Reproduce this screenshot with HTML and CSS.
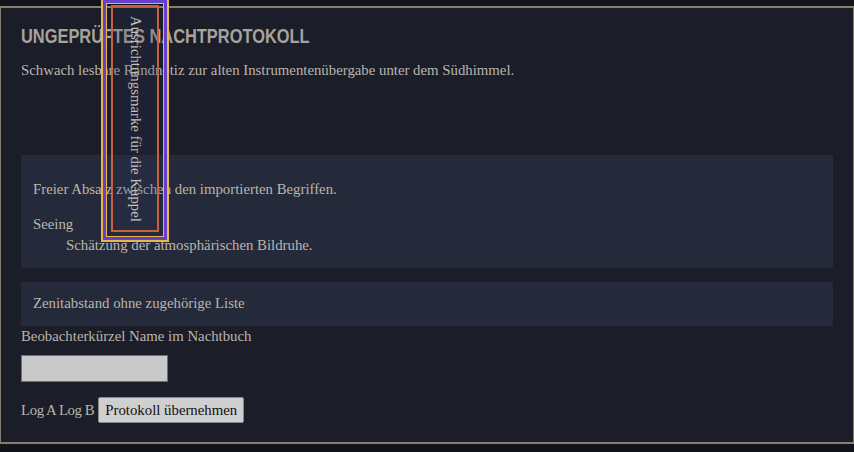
FILE: index.html
```html
<!DOCTYPE html>
<html lang="de">
<head>
<meta charset="utf-8">
<title>Ungeprüftes Nachtprotokoll</title>
<link rel="stylesheet" href="styles.css">
</head>
<body>
<main class="log">
  <h1 class="log-title">UNGEPRÜFTES NACHTPROTOKOLL</h1>
  <p class="log-note">Schwach lesbare Randnotiz zur alten Instrumentenübergabe unter dem Südhimmel.</p>
  <section class="panel panel-terms">
    <p class="panel-text">Freier Absatz zwischen den importierten Begriffen.</p>
    <dl class="terms">
      <dt>Seeing</dt>
      <dd>Schätzung der atmosphärischen Bildruhe.</dd>
    </dl>
  </section>
  <section class="panel panel-short">
    <p class="panel-line">Zenitabstand ohne zugehörige Liste</p>
  </section>
  <form class="entry">
    <label class="entry-label" for="obs">Beobachterkürzel Name im Nachtbuch</label>
    <input class="entry-input" id="obs" type="text">
    <div class="entry-row">
      <span class="entry-logs">Log A Log B</span>
      <button class="entry-button" type="button">Protokoll übernehmen</button>
    </div>
  </form>
</main>
<aside class="marker">
  <div class="marker-purple">
    <div class="marker-gold">
      <div class="marker-frame">
        <span class="marker-text">Ausrichtungsmarke für die Kuppel</span>
      </div>
    </div>
  </div>
</aside>
</body>
</html>
```

FILE: styles.css
```css
html, body {
  margin: 0;
  padding: 0;
  background: #121419;
}

body {
  padding-top: 6px;
  font-family: "Liberation Serif", "DejaVu Serif", serif;
  font-size: 14.8px;
  line-height: 21px;
  color: #bab5ad;
  position: relative;
  height: 446px;
  overflow: hidden;
}

.log {
  background: #1b1e29;
  border: 1px solid #877e72;
  border-top-width: 2px;
  border-bottom-width: 2px;
  padding: 16px 20px 19px;
}

.log-title {
  margin: 0;
  font-family: "Liberation Sans", Arial, sans-serif;
  font-weight: bold;
  font-size: 20px;
  line-height: 24px;
  color: #a8a39c;
  transform: scaleX(0.82);
  transform-origin: left center;
  white-space: nowrap;
}

.log-note {
  margin: 12px 0 0;
}

.panel {
  background: #252a3a;
  padding: 0 12px;
}

.panel-terms {
  margin-top: 74px;
  padding-top: 24px;
  padding-bottom: 12px;
}

.panel-text {
  margin: 0 0 14px;
}

.terms {
  margin: 0;
}

.terms dt {
  margin: 0;
}

.terms dd {
  margin: 0 0 0 33px;
}

.panel-short {
  margin-top: 14px;
  padding-top: 11px;
  padding-bottom: 12px;
}

.panel-line {
  margin: 0;
}

.entry {
  margin: 0;
}

.entry-label {
  display: block;
}

.entry-input {
  display: block;
  box-sizing: border-box;
  width: 147px;
  height: 27px;
  margin: 8px 0 0;
  background: #c9c9c9;
  border: 1px solid #6f6f6f;
  border-radius: 0;
  padding: 0 4px;
}

.entry-row {
  margin-top: 15px;
  display: flex;
  align-items: center;
  gap: 4px;
}

.entry-logs {
  letter-spacing: -0.4px;
}

.entry-button {
  box-sizing: border-box;
  height: 26px;
  padding: 0 6px;
  margin-left: 0;
  background: #cfcfcf;
  border: 1px solid #8a8a8a;
  border-radius: 2px;
  font-family: "Liberation Serif", "DejaVu Serif", serif;
  font-size: 14.8px;
  color: #111;
}

.marker {
  position: absolute;
  left: 101px;
  top: -2px;
  width: 68px;
  height: 244px;
  box-sizing: border-box;
  border: 2px solid #e9b64a;
}

.marker-purple {
  box-sizing: border-box;
  height: 100%;
  border: 3px solid #6540cc;
}

.marker-gold {
  box-sizing: border-box;
  height: 100%;
  border: 1px solid #e9b64a;
  padding: 1px 4px 4px;
}

.marker-frame {
  box-sizing: border-box;
  height: 100%;
  border: 2px solid #c8613f;
  background: rgba(40, 52, 96, 0.18);
  display: flex;
  justify-content: center;
  padding-top: 9px;
}

.marker-text {
  writing-mode: vertical-rl;
  font-size: 14.8px;
  line-height: 21px;
  color: #c4bfb7;
  white-space: nowrap;
}
```
